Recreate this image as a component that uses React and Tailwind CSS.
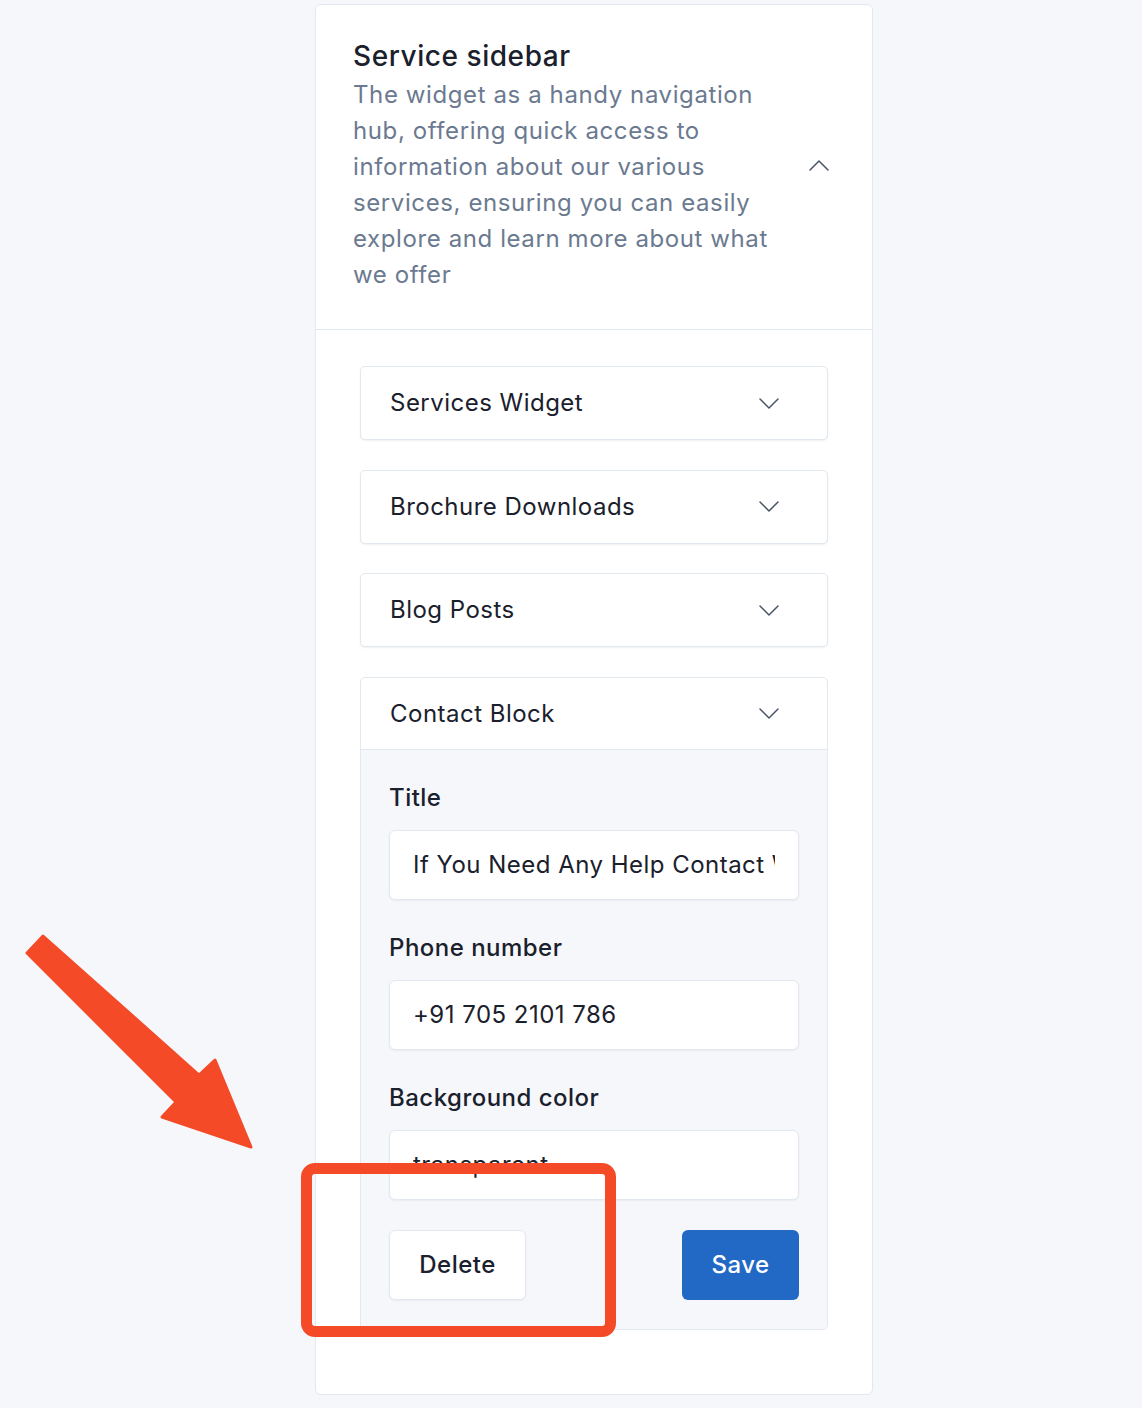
import React from "react";

function Chevron({ up = false }) {
  return (
    <svg width="20" height="11" viewBox="0 0 20 11" fill="none" className="shrink-0">
      <polyline
        points={up ? "1,10 10,1 19,10" : "1,1 10,10 19,1"}
        stroke="#4a5568"
        strokeWidth="1.5"
        strokeLinecap="round"
        strokeLinejoin="round"
      />
    </svg>
  );
}

function Item({ title }) {
  return (
    <div className="rounded-[5px] border border-[#e2e8f0] bg-white shadow-[0_1px_2px_rgba(0,0,0,0.06)]">
      <div className="flex h-[72px] items-center justify-between pl-[29px] pr-[48px]">
        <span className="text-[24px] tracking-[0.02em] text-[#1a202c]">{title}</span>
        <Chevron />
      </div>
    </div>
  );
}

function Field({ label, value, first }) {
  return (
    <div className={first ? "" : "mt-[30px]"}>
      <div className="text-[24px] font-medium leading-[36px] tracking-[0.02em] text-[#1a202c]">{label}</div>
      <div className="mt-[14px] flex h-[70px] items-center overflow-hidden whitespace-nowrap rounded-[6px] border border-[#e2e8f0] bg-white px-[23px] text-[24px] tracking-[0.02em] text-[#1a202c] shadow-[0_1px_2px_rgba(0,0,0,0.05)]">
        <span className="block w-full overflow-hidden">{value}</span>
      </div>
    </div>
  );
}

export default function App() {
  return (
    <div
      className="relative min-h-[1408px] w-full bg-[#f6f7fb] pt-[4px]"
      style={{ fontFamily: "Inter, 'Noto Sans', sans-serif" }}
    >
      <div className="ml-[315px] w-[558px] rounded-[6px] border border-[#e2e8f0] bg-white">
        {/* header */}
        <div className="flex items-center justify-between border-b border-[#e2e8f0] pb-[36px] pl-[37px] pr-[43px] pt-[33px]">
          <div className="w-[440px]">
            <div className="text-[28px] font-medium leading-[36px] tracking-[0.02em] text-[#1a202c]">Service sidebar</div>
            <p className="mt-[3px] text-[24px] leading-[36px] tracking-[0.025em] text-[#6b7a90]">
              The widget as a handy navigation hub, offering quick access to information about our various services,
              ensuring you can easily explore and learn more about what we offer
            </p>
          </div>
          <Chevron up />
        </div>

        {/* body */}
        <div className="flex flex-col gap-[29.7px] px-[44px] pb-[64px] pt-[36px]">
          <Item title="Services Widget" />
          <Item title="Brochure Downloads" />
          <Item title="Blog Posts" />
          <div className="overflow-hidden rounded-[5px] border border-[#e2e8f0] bg-white">
            <div className="flex h-[72px] items-center justify-between border-b border-[#e2e8f0] pl-[29px] pr-[48px]">
              <span className="text-[24px] tracking-[0.02em] text-[#1a202c]">Contact Block</span>
              <Chevron />
            </div>
            <div className="bg-[#f6f7fb] px-[28px] pb-[29px] pt-[30px]">
              <Field first label="Title" value="If You Need Any Help Contact With Us" />
              <Field label="Phone number" value="+91 705 2101 786" />
              <Field label="Background color" value="transparent" />
              <div className="mt-[30px] flex items-center justify-between">
                <button className="h-[70px] w-[137px] rounded-[6px] border border-[#e2e8f0] bg-white text-[24px] font-medium tracking-[0.02em] text-[#1a202c] shadow-[0_1px_2px_rgba(0,0,0,0.05)]">
                  Delete
                </button>
                <button className="h-[70px] w-[117px] rounded-[6px] bg-[#2269c5] text-[24px] font-medium tracking-[0.02em] text-white">
                  Save
                </button>
              </div>
            </div>
          </div>
        </div>
      </div>

      {/* annotation: red box */}
      <div className="pointer-events-none absolute left-[301px] top-[1163px] h-[174px] w-[315px] rounded-[14px] border-[11px] border-[#f44a27]" />

      {/* annotation: arrow */}
      <svg
        className="pointer-events-none absolute left-0 top-0"
        width="300"
        height="1200"
        viewBox="0 0 300 1200"
      >
        <polygon
          points="43,936 199,1075 215,1060 251,1147 162,1117 176,1102 27,953"
          fill="#f44a27"
          stroke="#f44a27"
          strokeWidth="3"
          strokeLinejoin="round"
        />
      </svg>
    </div>
  );
}
